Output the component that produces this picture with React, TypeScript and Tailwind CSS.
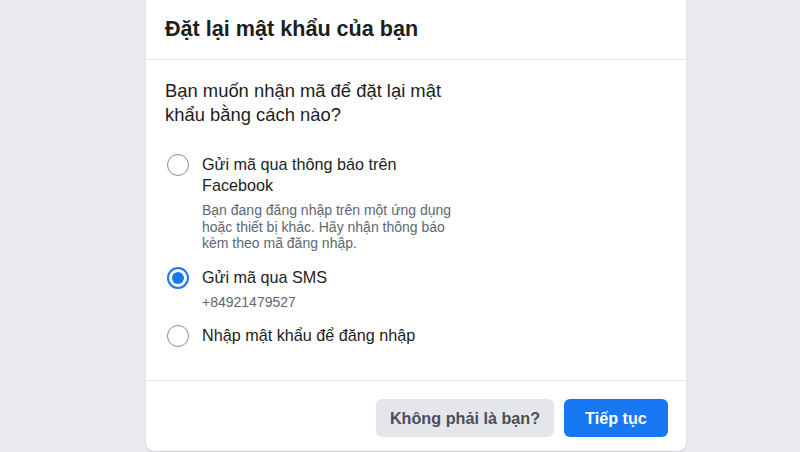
import { useState } from "react";

const options = [
  {
    id: "fb",
    label: "Gửi mã qua thông báo trên Facebook",
    desc: "Bạn đang đăng nhập trên một ứng dụng hoặc thiết bị khác. Hãy nhận thông báo kèm theo mã đăng nhập.",
  },
  { id: "sms", label: "Gửi mã qua SMS", desc: "+84921479527" },
  { id: "pw", label: "Nhập mật khẩu để đăng nhập", desc: "" },
];

function Radio({ checked }: { checked: boolean }) {
  return checked ? (
    <span className="flex h-[22px] w-[22px] shrink-0 items-center justify-center rounded-full border-2 border-[#1877f2]">
      <span className="block h-[12px] w-[12px] rounded-full bg-[#1877f2]" />
    </span>
  ) : (
    <span className="block h-[22px] w-[22px] shrink-0 rounded-full border-[1.5px] border-[#8a8d91]" />
  );
}

export default function App() {
  const [selected, setSelected] = useState("sms");

  return (
    <div className="h-[452px] overflow-hidden bg-[#e9ebee] font-['Liberation_Sans',Arial,sans-serif]">
      <div className="ml-[146px] flex h-[451px] w-[540px] flex-col rounded-b-lg bg-white shadow-[0_1px_2px_rgba(0,0,0,0.15)]">
        {/* Header */}
        <div className="flex h-[60px] items-center border-b border-[#e4e6eb] px-[19px]">
          <h2 className="text-[21.6px] font-bold text-[#1c1e21]">Đặt lại mật khẩu của bạn</h2>
        </div>

        {/* Body */}
        <div className="border-b border-[#e4e6eb] px-[19px] pt-[19px] pb-[33px]">
          <p className="w-[300px] text-[18.4px] leading-[24px] text-[#1c1e21]">
            Bạn muốn nhận mã để đặt lại mật khẩu bằng cách nào?
          </p>
          <div className="mt-[27px] flex flex-col gap-[15px]">
            {options.map((o) => (
              <label
                key={o.id}
                className="flex cursor-pointer items-start gap-[13px] pl-[2px]"
                onClick={() => setSelected(o.id)}
              >
                <Radio checked={selected === o.id} />
                <span className="block w-[255px]">
                  <span className="block text-[16.2px] leading-[21px] text-[#1c1e21]">{o.label}</span>
                  {o.desc && (
                    <span className="mt-[6px] block text-[14px] leading-[16.5px] text-[#606770]">{o.desc}</span>
                  )}
                </span>
              </label>
            ))}
          </div>
        </div>

        {/* Footer */}
        <div className="flex justify-end gap-[10px] px-[18px] pt-[18px]">
          <button className="h-[38px] w-[178px] rounded-md bg-[#e4e6eb] text-[16.2px] font-bold text-[#4b4f56]">
            Không phải là bạn?
          </button>
          <button className="h-[38px] w-[104px] rounded-md bg-[#1877f2] text-[16.2px] font-bold text-white">
            Tiếp tục
          </button>
        </div>
      </div>
    </div>
  );
}
